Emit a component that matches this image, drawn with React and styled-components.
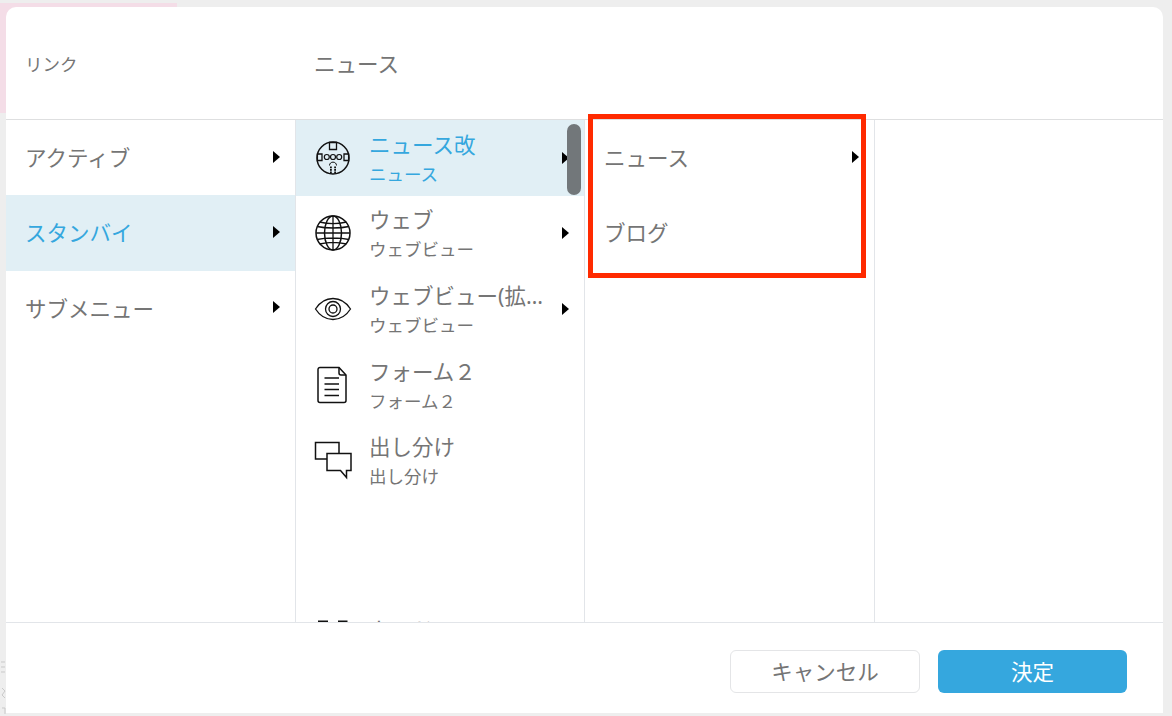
import React from "react";
import styled, { createGlobalStyle } from "styled-components";

const Global = createGlobalStyle`
  html, body { margin: 0; padding: 0; background: #efefef; }
  body { font-family: "Noto Sans CJK JP", "Noto Sans", sans-serif; }
`;

const Page = styled.div`
  position: relative;
  width: 1172px;
  height: 716px;
  box-sizing: border-box;
  padding: 7px 9px 3px 6px;
  overflow: hidden;
  background:
    linear-gradient(#f4dde7, #f4dde7) 0 3px / 177px 110px no-repeat,
    #eeeeee;
`;

const BackdropMarks = styled.svg`
  position: absolute;
  left: 0;
  top: 655px;
  width: 6px;
  height: 61px;
`;

const Modal = styled.div`
  position: relative;
  height: 706px;
  background: #fff;
  border-radius: 10px 10px 0 0;
  display: flex;
  flex-direction: column;
`;

const Header = styled.header`
  height: 113px;
  box-sizing: border-box;
  flex: none;
  display: grid;
  grid-template-columns: 290px 1fr;
  align-items: center;
  border-bottom: 1px solid #dedfe0;
  color: #757575;
`;

const LinkLabel = styled.div`
  padding-left: 19px;
  font-size: 17.5px;
  font-weight: 400;
  line-height: 24px;
  margin-top: 1px;
`;

const SectionTitle = styled.div`
  padding-left: 18px;
  font-size: 21.5px;
  font-weight: 400;
  line-height: 28px;
`;

const Columns = styled.div`
  height: 502px;
  flex: none;
  display: grid;
  grid-template-columns: 290px 289px 290px 1fr;
`;

const Column = styled.div`
  position: relative;
  border-right: 1px solid #e2e5e9;
  min-width: 0;
  overflow: ${(p) => (p.$clip ? "hidden" : "visible")};
`;

const LastColumn = styled.div``;

const MenuRow = styled.div`
  height: 75.3px;
  box-sizing: border-box;
  display: flex;
  align-items: center;
  padding: 0 15px 2px ${(p) => p.$indent}px;
  background: ${(p) => (p.$active ? "#e1eff5" : "transparent")};
  color: ${(p) => (p.$active ? "#35a7de" : "#757575")};
  font-size: 21.5px;
  font-weight: 400;
`;

const IconRow = styled.div`
  height: 75.6px;
  display: flex;
  align-items: center;
  padding: 0 15px 0 18px;
  margin-top: ${(p) => p.$gap || 0}px;
  background: ${(p) => (p.$active ? "#e1eff5" : "transparent")};
  color: ${(p) => (p.$active ? "#35a7de" : "#757575")};
  svg.item-icon { flex: none; margin-right: 17px; overflow: visible; }
`;

const RowText = styled.div`
  flex: 1;
  min-width: 0;
  display: flex;
  flex-direction: column;
  gap: 3px;
  padding-top: 1px;
`;

const RowTitle = styled.div`
  font-family: "Noto Sans", "Noto Sans CJK JP", sans-serif;
  font-size: 21.5px;
  font-weight: 400;
  line-height: 28px;
  white-space: nowrap;
  overflow: hidden;
  text-overflow: ellipsis;
`;

const RowSub = styled.div`
  font-size: 17.5px;
  font-weight: 400;
  line-height: 24px;
  white-space: nowrap;
`;

const Arrow = styled.span`
  flex: none;
  margin-left: auto;
  width: 0;
  height: 0;
  border-left: 7.5px solid #000;
  border-top: 6px solid transparent;
  border-bottom: 6px solid transparent;
`;

const Thumb = styled.div`
  position: absolute;
  left: 271px;
  top: 4px;
  width: 14px;
  height: 71px;
  border-radius: 7px;
  background: #72777a;
`;

const Highlight = styled.div`
  position: absolute;
  left: 3px;
  top: -6px;
  width: 278px;
  height: 164px;
  box-sizing: border-box;
  border: 5px solid #ff2a00;
`;

const Footer = styled.footer`
  flex: 1;
  border-top: 1px solid #e2e5e9;
  display: flex;
  justify-content: flex-end;
  align-items: flex-start;
  gap: 18px;
  padding: 27px 36px 0 0;
`;

const CancelButton = styled.button`
  width: 190px;
  height: 43px;
  box-sizing: border-box;
  background: #fff;
  border: 1px solid #e4e5e7;
  border-radius: 6px;
  color: #757575;
  font: 400 21.5px "Noto Sans CJK JP", sans-serif;
  padding: 0 0 2px;
`;

const ConfirmButton = styled.button`
  width: 189px;
  height: 43px;
  background: #35a7de;
  border: 0;
  border-radius: 6px;
  color: #fff;
  font: 400 21.5px "Noto Sans CJK JP", sans-serif;
  padding: 0 0 2px;
`;

const base = {
  className: "item-icon",
  width: 38,
  height: 38,
  viewBox: "0 0 38 38",
  fill: "none",
  stroke: "#111",
  strokeWidth: 1.5,
};

const MaskIcon = () => (
  <svg {...base}>
    <circle cx="19" cy="19" r="16" />
    <path d="M15.500 3.500h7v7h-7zM3.400 15h4.600v6.500H3.400zM34.600 15H30v6.500h4.600z" strokeWidth="1.300" />
    <circle cx="12.800" cy="18" r="2.500" strokeWidth="1.200" />
    <circle cx="19" cy="18" r="2.500" strokeWidth="1.200" />
    <circle cx="25.200" cy="18" r="2.500" strokeWidth="1.200" />
    <path d="M15.500 26.500c0-4.500 7-4.500 7 0" strokeWidth="1" />
    <g fill="#111" stroke="none">
      <rect x="16" y="27.500" width="1.800" height="1.800" />
      <rect x="20.200" y="27.500" width="1.800" height="1.800" />
      <rect x="16" y="30" width="1.800" height="1.800" />
      <rect x="20.200" y="30" width="1.800" height="1.800" />
      <rect x="16" y="32.500" width="1.800" height="1.800" />
      <rect x="20.200" y="32.500" width="1.800" height="1.800" />
    </g>
  </svg>
);

const GlobeIcon = () => (
  <svg {...base}>
    <circle cx="19" cy="19" r="17" />
    <ellipse cx="19" cy="19" rx="8.500" ry="17" />
    <path d="M19 2v34M3 12.500c9 2 23 2 32 0M2.200 19h33.600M3 25.500c9-2 23-2 32 0M5.500 8c8 2 19 2 27 0M5.500 30c8-2 19-2 27 0" strokeWidth="1.300" />
  </svg>
);

const EyeIcon = () => (
  <svg {...base}>
    <path d="M1.500 19C6 12 12 8.500 19 8.500S32 12 36.500 19C32 26 26 29.500 19 29.500S6 26 1.500 19z" strokeWidth="1.300" />
    <circle cx="19" cy="19" r="7.500" strokeWidth="1.300" />
    <circle cx="19" cy="19" r="4" strokeWidth="1.300" />
  </svg>
);

const DocIcon = () => (
  <svg {...base}>
    <path d="M25 1.500H6a2 2 0 0 0-2 2v31a2 2 0 0 0 2 2h24a2 2 0 0 0 2-2V9z" />
    <path d="M25 1.500V7a2 2 0 0 0 2 2h5" />
    <path d="M10.500 12h14.500M10.500 18h14.500M10.500 23.500h14.500M10.500 29.500h14.500" />
  </svg>
);

const ChatIcon = () => (
  <svg {...base}>
    <path d="M13 18H1.500V1.500h23.500V12.500" />
    <path d="M13 12.500h24v17h-4.500v7l-6-7H13z" />
  </svg>
);

const GridIcon = () => (
  <svg {...base}>
    <path d="M4 -2.500h10M24 -2.500h9.500" strokeWidth="2" />
  </svg>
);

const primary = [
  { label: "アクティブ" },
  { label: "スタンバイ", active: true },
  { label: "サブメニュー" },
];

const items = [
  { Icon: MaskIcon, title: "ニュース改", sub: "ニュース", active: true, arrow: true },
  { Icon: GlobeIcon, title: "ウェブ", sub: "ウェブビュー", arrow: true },
  { Icon: EyeIcon, title: "ウェブビュー(拡張版)", sub: "ウェブビュー", arrow: true },
  { Icon: DocIcon, title: "フォーム２", sub: "フォーム２" },
  { Icon: ChatIcon, title: "出し分け", sub: "出し分け" },
  { Icon: GridIcon, title: "カード", sub: "カード", gap: 107 },
];

const secondary = [{ label: "ニュース", arrow: true }, { label: "ブログ" }];

export default function App() {
  return (
    <Page>
      <Global />
      <BackdropMarks viewBox="0 0 6 61" fill="none" stroke="#c9c9c9" strokeWidth="1">
        <path d="M1 7h4M1 12h4M1 17h4M2 33l3 3-3 4 3 3M2 53h3v6" />
      </BackdropMarks>
      <Modal>
        <Header>
          <LinkLabel>リンク</LinkLabel>
          <SectionTitle>ニュース</SectionTitle>
        </Header>
        <Columns>
          <Column>
            {primary.map((r) => (
              <MenuRow key={r.label} $indent={19} $active={r.active}>
                {r.label}
                <Arrow />
              </MenuRow>
            ))}
          </Column>
          <Column $clip>
            {items.map(({ Icon, title, sub, active, arrow, gap }) => (
              <IconRow key={title} $active={active} $gap={gap}>
                <Icon />
                <RowText>
                  <RowTitle>{title}</RowTitle>
                  <RowSub>{sub}</RowSub>
                </RowText>
                {arrow && <Arrow />}
              </IconRow>
            ))}
            <Thumb />
          </Column>
          <Column>
            {secondary.map((r) => (
              <MenuRow key={r.label} $indent={19}>
                {r.label}
                {r.arrow && <Arrow />}
              </MenuRow>
            ))}
            <Highlight />
          </Column>
          <LastColumn />
        </Columns>
        <Footer>
          <CancelButton>キャンセル</CancelButton>
          <ConfirmButton>決定</ConfirmButton>
        </Footer>
      </Modal>
    </Page>
  );
}
